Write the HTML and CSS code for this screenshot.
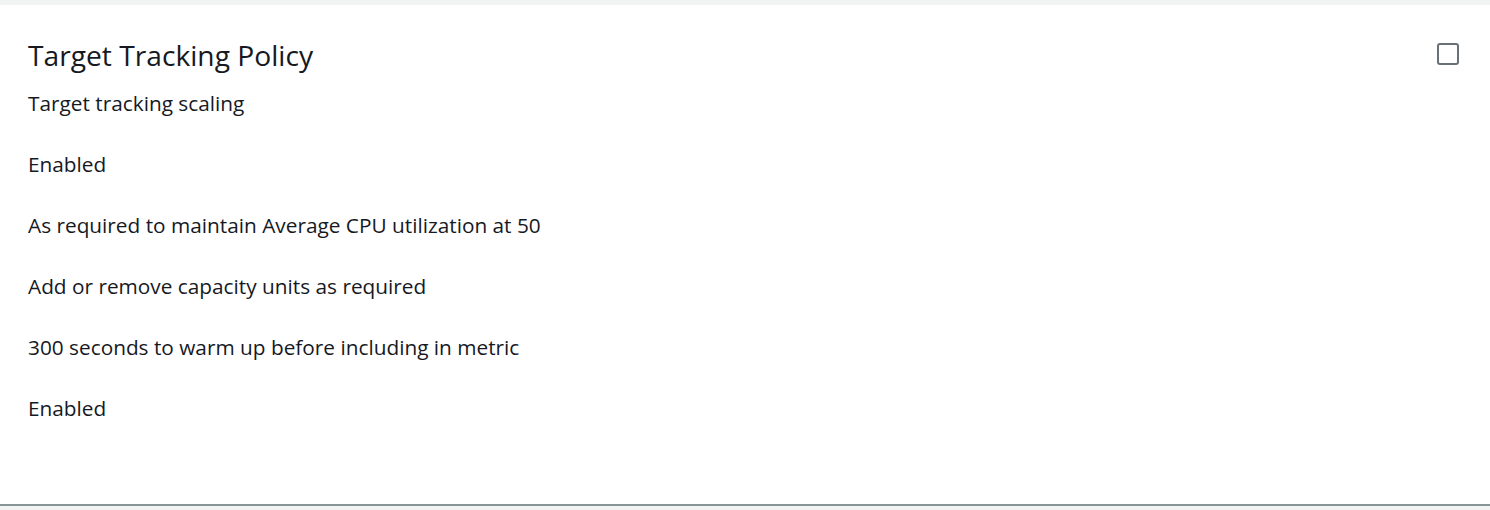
FILE: index.html
```html
<!DOCTYPE html>
<html>
<head>
<meta charset="utf-8">
<link rel="stylesheet" href="styles.css">
</head>
<body>
<div class="page">
  <div class="card">
    <div class="header">
      <h2 class="title">Target Tracking Policy</h2>
      <span class="checkbox"></span>
    </div>
    <div class="rows">
      <div class="row">Target tracking scaling</div>
      <div class="row">Enabled</div>
      <div class="row">As required to maintain Average CPU utilization at 50</div>
      <div class="row">Add or remove capacity units as required</div>
      <div class="row">300 seconds to warm up before including in metric</div>
      <div class="row">Enabled</div>
    </div>
  </div>
</div>
</body>
</html>
```

FILE: styles.css
```css
html, body {
  margin: 0;
  padding: 0;
  background: #f2f3f3;
}
.page {
  width: 1490px;
  height: 510px;
  padding-top: 5px;
  box-sizing: border-box;
  font-family: "Open Sans", "Noto Sans", sans-serif;
  color: #16191f;
}
.card {
  background: #ffffff;
  height: 501px;
  border-bottom: 2px solid #879596;
  box-sizing: border-box;
  padding: 33px 31px 0 28px;
}
.header {
  display: flex;
  justify-content: space-between;
  align-items: flex-start;
}
.title {
  margin: 0;
  font-weight: 400;
  font-size: 28.2px;
  line-height: 34px;
}
.checkbox {
  width: 18px;
  height: 18px;
  border: 2px solid #687078;
  border-radius: 3px;
  margin-top: 5px;
}
.rows {
  display: flex;
  flex-direction: column;
  gap: 31px;
  margin-top: 16px;
}
.row {
  font-size: 20.8px;
  line-height: 30px;
}
```
